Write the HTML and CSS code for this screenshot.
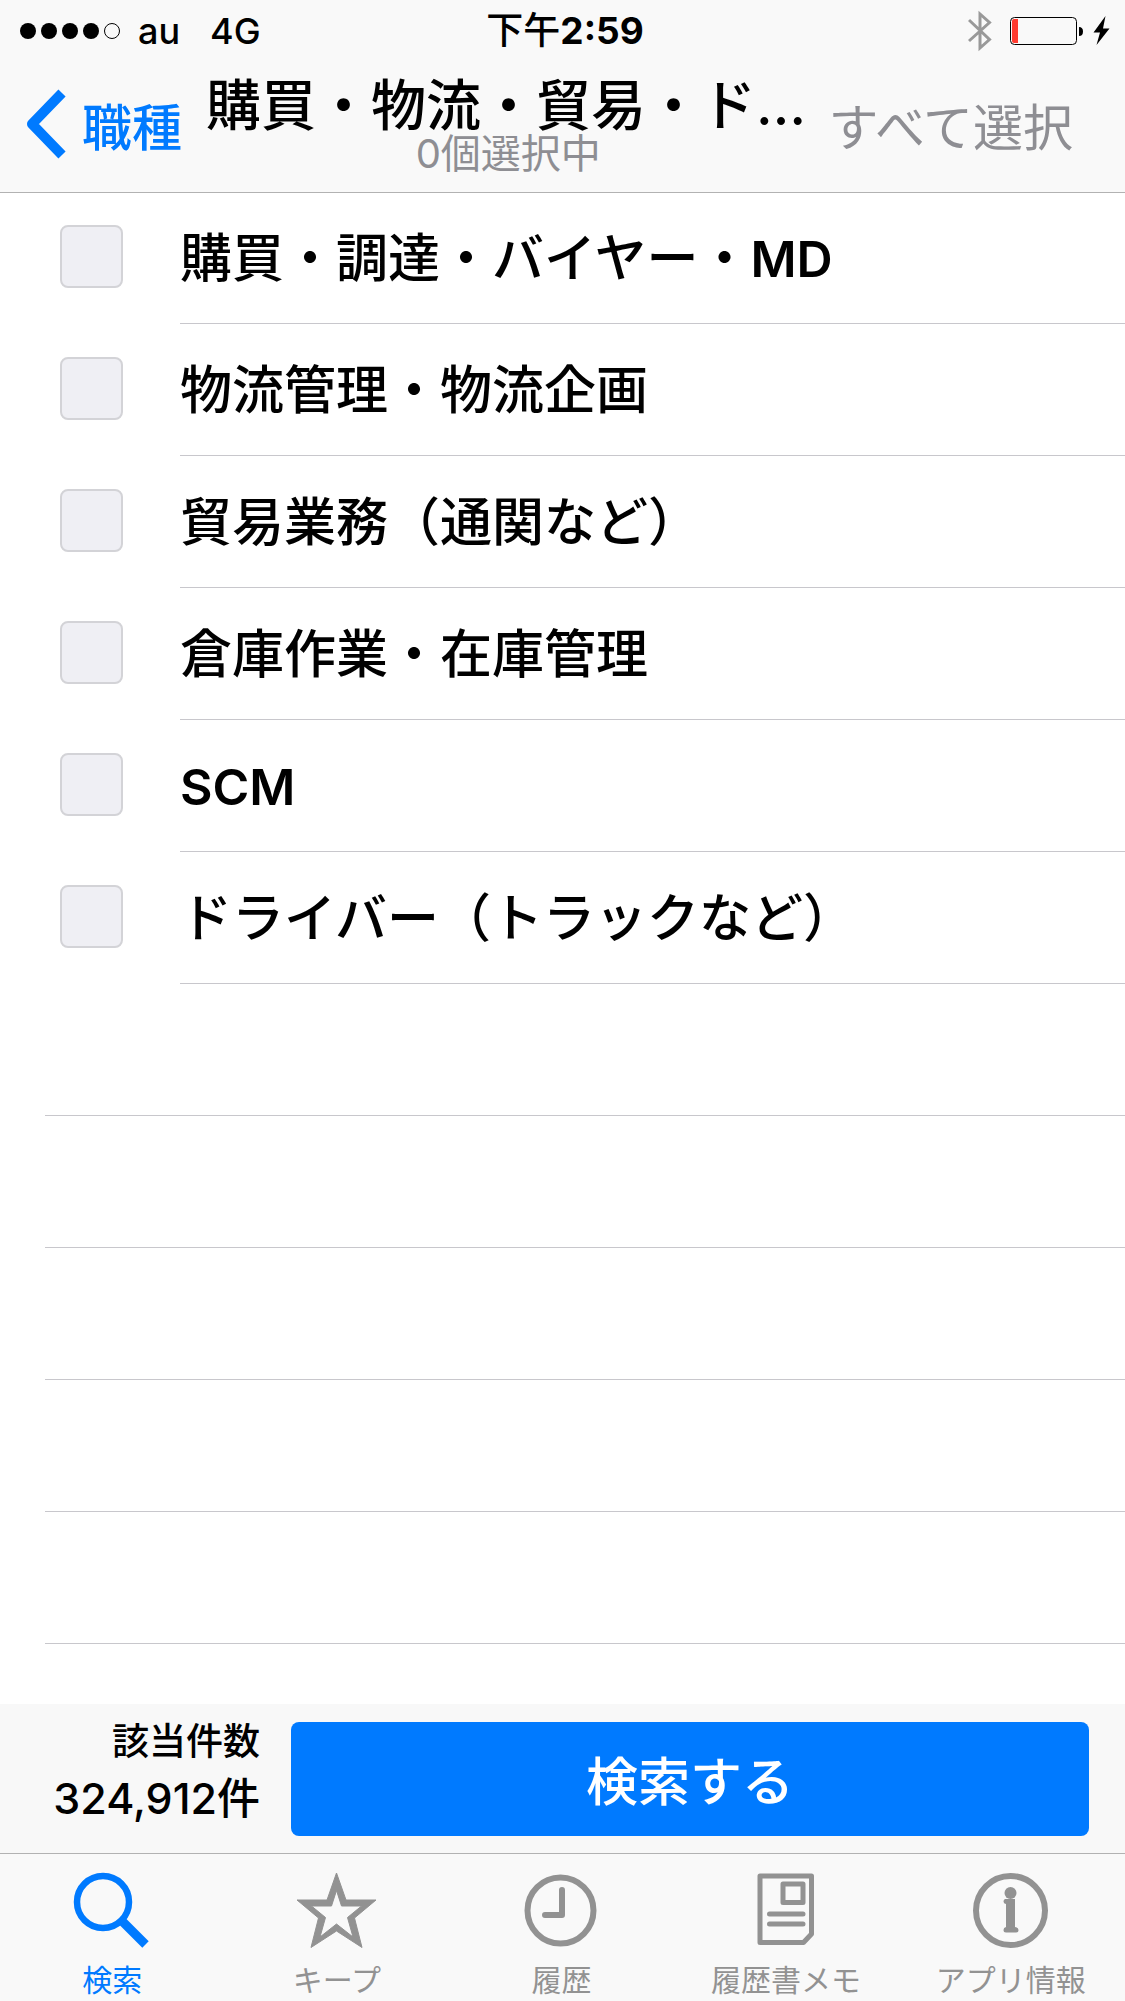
FILE: index.html
```html
<!DOCTYPE html>
<html lang="ja">
<head>
<meta charset="utf-8">
<meta name="viewport" content="width=device-width, initial-scale=1">
<title>職種選択</title>
<link rel="stylesheet" href="styles.css">
</head>
<body>
<header class="top">
  <div class="status">
    <div class="carrier">
      <svg class="signal" width="100" height="16" viewBox="0 0 100 16" aria-hidden="true"><circle cx="8" cy="8" r="8"/><circle cx="29" cy="8" r="8"/><circle cx="50" cy="8" r="8"/><circle cx="71" cy="8" r="8"/><circle cx="92" cy="8" r="7.5" fill="none" stroke="#000"/></svg>
      <span>au</span><span class="network">4G</span>
    </div>
    <div class="time">下午<b>2:59</b></div>
    <div class="indicators">
      <svg width="24" height="42" viewBox="0 0 24 42" fill="none" stroke="#999" stroke-width="3" aria-hidden="true"><path d="M1 10 21.500 29.500 12 38V4l9.500 8.500L1 31"/></svg>
      <svg width="100" height="30" viewBox="0 0 100 30" aria-hidden="true"><rect x=".5" y="1.500" width="66" height="27" rx="4" fill="none" stroke="#000"/><path d="M4 3h4v24H4q-2 0-2-2V5q0-2 2-2z" fill="#ff3b30"/><path d="M69 11q4 0 4 4.500T69 20z"/><path d="M95.500 0 83.500 16.500h6.500L86.500 29 99.500 12.500h-6.500z"/></svg>
    </div>
  </div>
  <nav class="nav">
    <a class="back" href="#"><svg width="40" height="70" viewBox="0 0 40 70" fill="none" stroke="#007aff" stroke-width="10" stroke-linejoin="round" aria-hidden="true"><path d="M36 4 6 35l30 31"/></svg>職種</a>
    <div class="heading">
      <h1>購買・物流・貿易・ド…</h1>
      <p>0個選択中</p>
    </div>
    <button class="select-all" type="button">すべて選択</button>
  </nav>
</header>
<main class="content">
  <ul class="list">
    <li class="row"><label><input type="checkbox"><span class="name">購買・調達・バイヤー・<span class="latin">MD</span></span></label></li>
    <li class="row"><label><input type="checkbox"><span class="name">物流管理・物流企画</span></label></li>
    <li class="row"><label><input type="checkbox"><span class="name">貿易業務（通関など）</span></label></li>
    <li class="row"><label><input type="checkbox"><span class="name">倉庫作業・在庫管理</span></label></li>
    <li class="row"><label><input type="checkbox"><span class="name"><span class="latin">SCM</span></span></label></li>
    <li class="row"><label><input type="checkbox"><span class="name">ドライバー（トラックなど）</span></label></li>
  </ul>
  <div class="blank"></div>
  <div class="blank"></div>
  <div class="blank"></div>
  <div class="blank"></div>
  <div class="blank"></div>
</main>
<section class="search-bar">
  <div class="count"><span class="count-label">該当件数</span><span class="count-value">324,912件</span></div>
  <button class="search" type="button">検索する</button>
</section>
<nav class="tabs">
  <a class="tab active" href="#"><svg viewBox="0 0 80 76" aria-hidden="true"><g fill="none" stroke="currentColor"><circle cx="31" cy="30" r="26" stroke-width="6.500"/><path d="M49 48 73.500 72.500" stroke-width="9"/></g></svg>検索</a>
  <a class="tab" href="#"><svg viewBox="0 0 80 76" aria-hidden="true"><path fill="currentColor" stroke="currentColor" stroke-linejoin="round" fill-rule="evenodd" d="M39.500 1 49 28H79L57.500 46 65 75.500 39.500 59 14 75.500 21.500 46 0 28H30ZM39.500 18.500 34.500 34H14.500L28.500 45.500 23 65 39.500 52 56 65 50.500 45.500 64.500 34H44.500Z"/></svg>キープ</a>
  <a class="tab" href="#"><svg viewBox="0 0 80 76" aria-hidden="true"><g fill="none" stroke="currentColor" stroke-width="6" stroke-linecap="round" stroke-linejoin="round"><circle cx="39.500" cy="38.500" r="33"/><path d="M41 18v25H24"/></g></svg>履歴</a>
  <a class="tab" href="#"><svg viewBox="0 0 80 76" aria-hidden="true"><g fill="none" stroke="currentColor" stroke-width="5" stroke-linecap="round" stroke-linejoin="round"><path d="M14 4H65.500V62L57.500 70.500H14ZM37 12H57V30.500H37ZM23.500 42H57M23.500 52H57"/></g></svg>履歴書メモ</a>
  <a class="tab" href="#"><svg viewBox="0 0 80 76" aria-hidden="true"><circle cx="39.500" cy="38.500" r="34.500" fill="none" stroke="currentColor" stroke-width="6"/><circle cx="39.500" cy="21" r="6" fill="currentColor"/><path fill="currentColor" d="M34 27H44V55Q47.500 55.500 47.500 58T45 60.500H35Q32.500 60.500 32.500 58T35 55V32Q32.500 31.500 32.500 29.500T34 27Z"/></svg>アプリ情報</a>
</nav>
</body>
</html>
```
FILE: styles.css
```css
* { box-sizing: border-box; }
body {
  margin: 0;
  min-height: 100vh;
  display: flex;
  flex-direction: column;
  background: #fff;
  color: #000;
  font-family: Inter, "Noto Sans CJK JP", sans-serif;
  font-weight: 500;
}
a { color: inherit; text-decoration: none; }
button { border: 0; padding: 0; background: none; font: inherit; cursor: pointer; }
h1, p, ul { margin: 0; padding: 0; }

.top {
  position: sticky;
  top: 0;
  z-index: 1;
  background: #f9f9f9;
  box-shadow: 0 1px #b2b2b2;
}
.status {
  height: 60px;
  padding: 0 15px 0 20px;
  display: grid;
  grid-template-columns: 1fr auto 1fr;
  align-items: center;
  font-size: 36px;
  line-height: 62px;
}
.carrier { display: flex; align-items: center; gap: 18px; }
.network { margin-left: 12px; }
.time { font-size: 37px; }
.time b { font-weight: 700; }
.indicators { display: flex; align-items: center; justify-content: flex-end; gap: 18px; }

.nav {
  height: 132px;
  padding: 0 52px 0 26px;
  display: flex;
}
.back {
  display: flex;
  align-items: center;
  gap: 16px;
  padding-bottom: 4px;
  color: #007aff;
  font-size: 50px;
}
.heading { flex: 1; min-width: 0; padding: 14px 18px 0 24px; text-align: center; }
.heading h1 {
  font-size: 55px;
  line-height: 62px;
  font-weight: 500;
  text-align: left;
  white-space: nowrap;
}
.heading p { font-size: 40px; line-height: 36px; font-weight: 400; color: #8e8e93; }
.select-all { padding-bottom: 4px; font-size: 50px; font-weight: 400; color: #8e8e93; white-space: nowrap; }

.content { flex: 1; }
.list { list-style: none; }
.row label {
  position: relative;
  display: flex;
  align-items: center;
  gap: 57px;
  height: 132px;
  padding: 0 0 4px 60px;
  font-size: 52px;
  line-height: 60px;
}
.row label::after {
  content: "";
  position: absolute;
  inset: auto 0 0 180px;
  height: 1px;
  background: #c8c7cc;
}
.row .name { padding-top: 6px; }
.row .latin { font-size: 50px; font-weight: 600; }
.row input {
  appearance: none;
  width: 63px;
  height: 63px;
  margin: 0;
  flex: none;
  border: 2px solid #d3d3d7;
  border-radius: 8px;
  background: #efeff4;
}
.row input:checked { background: #007aff; }
.blank { height: 132px; margin-left: 45px; border-bottom: 1px solid #c8c7cc; }

.search-bar {
  display: flex;
  gap: 31px;
  padding: 18px 36px 17px 0;
  background: #f8f8f8;
}
.count {
  width: 260px;
  flex: none;
  display: flex;
  flex-direction: column;
  align-items: flex-end;
  padding-top: 2px;
}
.count-label { font-size: 37px; line-height: 36px; }
.count-value { font-size: 43px; line-height: 76px; }
.search {
  flex: 1;
  height: 114px;
  padding-bottom: 2px;
  border-radius: 8px;
  background: #007aff;
  color: #fff;
  font-size: 52px;
}

.tabs {
  display: grid;
  grid-template-columns: repeat(5, 1fr);
  height: 148px;
  padding-right: 2px;
  border-top: 1px solid #b2b2b2;
  background: #f9f9f9;
}
.tab {
  display: flex;
  flex-direction: column;
  align-items: center;
  gap: 12px;
  padding-top: 18px;
  color: #929292;
  font-size: 30px;
  line-height: 40px;
  font-weight: 400;
}
.tab svg { width: 80px; height: 76px; flex: none; }
.tab.active { color: #007aff; }
```
